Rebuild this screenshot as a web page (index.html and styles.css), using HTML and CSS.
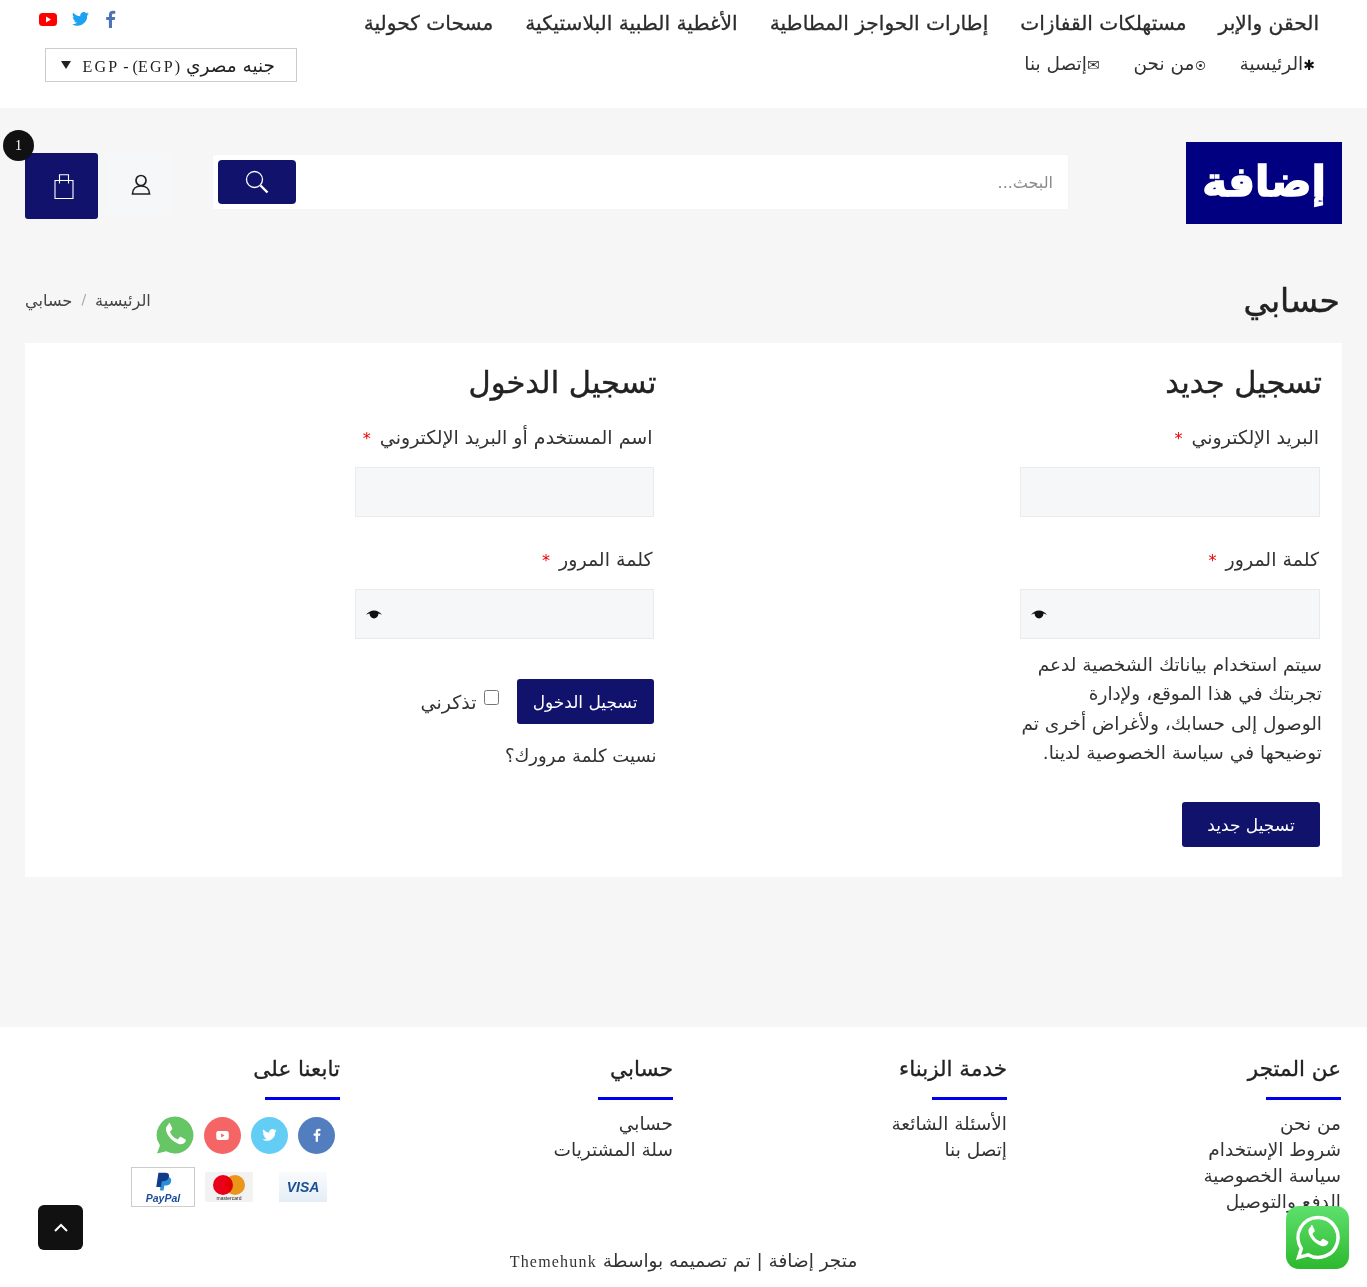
FILE: index.html
```html
<!DOCTYPE html>
<html lang="ar" dir="rtl">
<head>
  <meta charset="UTF-8">
  <title>حسابي — متجر إضافة</title>
  <link rel="stylesheet" href="styles.css">
</head>
<body>

  <!-- top bar -->
  <header class="top-bar">
    <div class="top-menus">
      <nav class="main-nav">
        <a href="#">الحقن والإبر</a>
        <a href="#">مستهلكات القفازات</a>
        <a href="#">إطارات الحواجز المطاطية</a>
        <a href="#">الأغطية الطبية البلاستيكية</a>
        <a href="#">مسحات كحولية</a>
      </nav>
      <nav class="sub-nav">
        <a href="#"><b>✱</b>الرئيسية</a>
        <a href="#"><i>⦿</i>من نحن</a>
        <a href="#"><i class="mail">✉</i>إتصل بنا</a>
      </nav>
    </div>
    <div class="top-side">
      <div class="top-social">
        <svg width="12" height="18" viewBox="0 0 12 18"><path fill="#4f74b5" d="M8 18V10h2.700l.5-3H8V5.200c0-.9.3-1.500 1.600-1.500h1.700V1C11 .9 10 .8 8.900 .8 6.500 .8 4.900 2.200 4.900 4.900V7H2.200v3h2.700v8z"/></svg>
        <svg width="17" height="14" viewBox="0 0 24 20"><path fill="#1da1f2" d="M24 2.400a9.800 9.800 0 0 1-2.800.8A4.900 4.900 0 0 0 23.300.5a9.800 9.800 0 0 1-3.100 1.200 4.900 4.900 0 0 0-8.400 4.500A14 14 0 0 1 1.700 1a4.900 4.900 0 0 0 1.500 6.600 4.900 4.900 0 0 1-2.200-.6 4.900 4.900 0 0 0 3.900 4.900 4.900 4.900 0 0 1-2.200.1 4.900 4.900 0 0 0 4.600 3.400A9.900 9.900 0 0 1 0 17.400 14 14 0 0 0 21.500 5a9.900 9.900 0 0 0 2.500-2.600z"/></svg>
        <svg width="18" height="13" viewBox="0 0 18 13"><rect width="18" height="13" rx="3.500" fill="#f00"/><path fill="#fff" d="M7 3.500v6l5-3z"/></svg>
      </div>
      <div class="currency">
        <span>جنيه مصري <span class="latin">(EGP) - EGP</span></span>
        <i class="currency-arrow"></i>
      </div>
    </div>
  </header>

  <div class="page">
    <!-- logo, search, cart -->
    <div class="mid-header">
      <div class="logo"><span>إضافة</span></div>
      <form class="search">
        <input type="text" placeholder="البحث...">
        <button type="button" class="search-btn">
          <svg width="26" height="26" viewBox="0 0 26 26" fill="none" stroke="#fff"><circle cx="10.500" cy="10.500" r="8" stroke-width="1.300"/><path d="M16.500 16.500l7 7" stroke-width="2.400"/></svg>
        </button>
      </form>
      <a class="account" href="#">
        <svg width="20" height="21" viewBox="0 0 20 21" fill="none" stroke="#222" stroke-width="1.700"><circle cx="10" cy="6.500" r="5"/><path d="M1.500 20c0-5 3.500-8 8.500-8s8.500 3 8.500 8z"/></svg>
      </a>
      <a class="cart" href="#">
        <svg width="20" height="25" viewBox="0 0 20 25" fill="none" stroke="#fff" stroke-width="1.100"><path d="M1 6.500h18v18H1zM5.500 9.500V.8h9v8.700"/></svg>
        <span class="cart-count">1</span>
      </a>
    </div>

    <div class="title-row">
      <h1>حسابي</h1>
      <div class="crumbs"><a href="#">الرئيسية</a><span class="crumb-sep">/</span><span>حسابي</span></div>
    </div>

    <!-- forms -->
    <section class="panel">
      <div class="col col-register">
        <h2>تسجيل جديد</h2>
        <label class="field-label">البريد الإلكتروني <em>*</em></label>
        <input class="field" type="text">
        <label class="field-label">كلمة المرور <em>*</em></label>
        <div class="pass-wrap">
          <input class="field" type="text">
          <svg class="eye" width="16" height="9" viewBox="0 0 16 9"><path fill="#111" d="M0 5C2 2 5 .5 8 .5S14 2 16 5c-1.200-.8-2.300-1.300-3.500-1.500C12.300 6.300 10.500 8.500 8 8.500S3.700 6.300 3.500 3.500C2.300 3.700 1.200 4.200 0 5z"/></svg>
        </div>
        <p class="privacy">سيتم استخدام بياناتك الشخصية لدعم تجربتك في هذا الموقع، ولإدارة<br>الوصول إلى حسابك، ولأغراض أخرى تم توضيحها في سياسة الخصوصية لدينا.</p>
        <button type="button" class="btn btn-register">تسجيل جديد</button>
      </div>
      <div class="col col-login">
        <h2>تسجيل الدخول</h2>
        <label class="field-label">اسم المستخدم أو البريد الإلكتروني <em>*</em></label>
        <input class="field" type="text">
        <label class="field-label">كلمة المرور <em>*</em></label>
        <div class="pass-wrap">
          <input class="field" type="text">
          <svg class="eye" width="16" height="9" viewBox="0 0 16 9"><path fill="#111" d="M0 5C2 2 5 .5 8 .5S14 2 16 5c-1.200-.8-2.300-1.300-3.500-1.500C12.300 6.300 10.500 8.500 8 8.500S3.700 6.300 3.500 3.500C2.300 3.700 1.200 4.200 0 5z"/></svg>
        </div>
        <div class="login-row">
          <button type="button" class="btn">تسجيل الدخول</button>
          <label class="remember"><input type="checkbox"> تذكرني</label>
        </div>
        <a class="lost" href="#">نسيت كلمة مرورك؟</a>
      </div>
    </section>
  </div>

  <footer class="footer">
    <div class="foot-cols">
      <div class="foot-col">
        <h3>عن المتجر</h3>
        <a href="#">من نحن</a>
        <a href="#">شروط الإستخدام</a>
        <a href="#">سياسة الخصوصية</a>
        <a href="#">الدفع والتوصيل</a>
      </div>
      <div class="foot-col">
        <h3>خدمة الزبناء</h3>
        <a href="#">الأسئلة الشائعة</a>
        <a href="#">إتصل بنا</a>
      </div>
      <div class="foot-col">
        <h3>حسابي</h3>
        <a href="#">حسابي</a>
        <a href="#">سلة المشتريات</a>
      </div>
      <div class="foot-col foot-follow">
        <h3>تابعنا على</h3>
        <div class="foot-social">
          <span class="round round-fb"><svg width="9" height="16" viewBox="0 0 12 18"><path fill="#fff" d="M8 18V10h2.700l.5-3H8V5.200c0-.9.3-1.500 1.600-1.500h1.700V1C11 .9 10 .8 8.900 .8 6.500 .8 4.900 2.200 4.900 4.900V7H2.200v3h2.700v8z"/></svg></span>
          <span class="round round-tw"><svg width="15" height="12" viewBox="0 0 24 20"><path fill="#fff" d="M24 2.400a9.800 9.800 0 0 1-2.800.8A4.900 4.900 0 0 0 23.300.5a9.800 9.800 0 0 1-3.100 1.200 4.900 4.900 0 0 0-8.400 4.500A14 14 0 0 1 1.700 1a4.900 4.900 0 0 0 1.500 6.600 4.900 4.900 0 0 1-2.200-.6 4.900 4.900 0 0 0 3.900 4.900 4.900 4.900 0 0 1-2.200.1 4.900 4.900 0 0 0 4.600 3.400A9.900 9.900 0 0 1 0 17.400 14 14 0 0 0 21.500 5a9.900 9.900 0 0 0 2.500-2.600z"/></svg></span>
          <span class="round round-yt"><svg width="13" height="9" viewBox="0 0 18 13"><rect width="18" height="13" rx="3" fill="#fff"/><path fill="#f56565" d="M7 3.500v6l5-3z"/></svg></span>
          <svg class="round-wa" width="39" height="38" viewBox="0 0 39 38"><path fill="#66c564" d="M20 .5a18.500 18.500 0 1 1-8.800 34.800L2 37.500l3-8A18.500 18.500 0 0 1 20 .5z"/><path fill="#fff" d="M13.500 8.500c-1.500 1-3 3-2.500 5.800 1 5.500 7 12 13 13.700 3 .8 5.500-.6 6.500-2.500.4-.8.400-1.600 0-2l-4.300-2.600c-.6-.3-1.200-.1-1.600.4l-1.300 1.600c-.4.400-.8.500-1.400.2-3-1.400-5.300-3.700-6.700-6.700-.2-.5-.1-1 .3-1.400l1.400-1.300c.4-.4.500-1 .3-1.500l-2-4.500c-.4-.8-1-.9-1.700-.2z"/></svg>
        </div>
        <div class="pay-cards">
          <span class="pay pay-visa"><b>VISA</b></span>
          <span class="pay pay-master"><i class="mc-red"></i><i class="mc-orange"></i><small>mastercard</small></span>
          <span class="pay pay-paypal">
            <svg width="20" height="24" viewBox="0 0 20 24"><path fill="#2a8fd6" d="M7 6h8c3 0 4.500 2 4 5-.6 3.500-3 5-6 5h-2l-1 6H6z"/><path fill="#123a8a" d="M4 1h8c3.500 0 5 2 4.500 4.500-.6 3.500-3 5.500-6.500 5.500H8l-1 7H1.500z"/></svg>
            <b class="pp-name">PayPal</b>
          </span>
        </div>
      </div>
    </div>
    <p class="copyright">متجر إضافة | تم تصميمه بواسطة <span class="latin">Themehunk</span></p>
  </footer>

  <a class="to-top" href="#">
    <svg width="14" height="9" viewBox="0 0 14 9" fill="none" stroke="#fff" stroke-width="2"><path d="M1 8l6-6 6 6"/></svg>
  </a>
  <a class="wa-float" href="#">
    <svg width="48" height="48" viewBox="0 0 48 48"><path fill="none" stroke="#fff" stroke-width="3.500" d="M24 3.500a20 20 0 1 1-10 37.300L4.500 43.500l2.800-9A20 20 0 0 1 24 3.500z"/><path fill="#fff" d="M17 12.500c-1.500 1-3 3-2.500 5.800 1 5.500 7 12 13 13.700 3 .8 5.500-.6 6.500-2.500.4-.8.400-1.600 0-2l-4.300-2.600c-.6-.3-1.200-.1-1.600.4l-1.300 1.600c-.4.400-.8.500-1.400.2-3-1.400-5.300-3.700-6.700-6.700-.2-.5-.1-1 .3-1.400l1.400-1.300c.4-.4.500-1 .3-1.500l-2-4.500c-.4-.8-1-.9-1.700-.2z"/></svg>
  </a>
</body>
</html>
```

FILE: styles.css
```css
:root {
  --navy: #10126b;
  --text: #222;
  --line: #e8eaec;
  --field: #f6f7f9;
  --page: #f6f6f6;
}
*, *::before, *::after { box-sizing: border-box; margin: 0; padding: 0; }
body {
  font-family: "DejaVu Sans", sans-serif;
  color: var(--text);
  background: #fff;
}
a { color: inherit; text-decoration: none; }
.latin { font-family: "Liberation Serif", serif; }

/* top bar */
.top-bar {
  height: 108px;
  display: flex;
  justify-content: space-between;
  padding: 0 48px 0 45px;
}
.main-nav {
  display: flex;
  gap: 32px;
  height: 46px;
  align-items: center;
  font-size: 20.200px;
  color: #2c2c2c;
  white-space: nowrap;
  -webkit-text-stroke: .3px #2c2c2c;
}
.sub-nav {
  display: flex;
  gap: 34px;
  margin-top: 8px;
  padding-right: 4px;
  font-size: 18.500px;
  line-height: 20px;
  color: #333;
}
.sub-nav i { font-style: normal; font-size: 11px; }
.sub-nav i.mail { font-size: 15px; }
.sub-nav b { font-size: 14px; color: #111; }
.top-side {
  width: 252px;
  display: flex;
  flex-direction: column;
}
.top-social {
  display: flex;
  justify-content: flex-end;
  align-items: center;
  gap: 15px;
  height: 38px;
  margin-left: -6px;
}
.currency {
  margin-top: 10px;
  height: 34px;
  border: 1px solid #ccc;
  display: flex;
  align-items: center;
  gap: 11px;
  padding: 0 21px 0 13px;
  font-size: 18.500px;
  white-space: nowrap;
}
.currency .latin { font-size: 16px; letter-spacing: 2.200px; }
.currency-arrow {
  width: 0; height: 0;
  border-left: 5.500px solid transparent;
  border-right: 5.500px solid transparent;
  border-top: 8px solid #222;
}

/* page body */
.page {
  background: var(--page);
  padding: 34px 25px 150px;
}
.mid-header {
  display: flex;
  align-items: flex-start;
  height: 82px;
}
.logo {
  width: 156px;
  height: 82px;
  background: #000080;
  color: #fff;
  display: flex;
  align-items: center;
  justify-content: center;
  font-size: 42px;
  font-weight: 700;
  line-height: 1;
  -webkit-text-stroke: 1.500px #fff;
}
.logo span { margin-top: -3px; }
.search {
  width: 857px;
  height: 56px;
  margin: 12px 117px 0 0;
  background: #fff;
  border: 1px solid #f1f5fb;
  border-radius: 3px;
  display: flex;
  align-items: center;
  padding: 0 15px 0 5px;
}
.search input {
  flex: 1;
  border: 0;
  outline: 0;
  background: none;
  font: inherit;
  font-size: 16px;
}
.search input::placeholder { color: #8a8a8a; }
.search-btn {
  width: 78px;
  height: 44px;
  border: 0;
  border-radius: 4px;
  background: var(--navy);
  display: flex;
  align-items: center;
  justify-content: center;
}
.account {
  width: 62px;
  height: 62px;
  margin: 11px 40px 0 0;
  background: #f6f7f8;
  border-radius: 4px;
  display: flex;
  align-items: center;
  justify-content: center;
}
.cart {
  position: relative;
  width: 73px;
  height: 66px;
  margin: 11px 12px 0 0;
  padding-left: 4px;
  background: var(--navy);
  border-radius: 3px;
  display: flex;
  align-items: center;
  justify-content: center;
}
.cart-count {
  position: absolute;
  top: -23px;
  left: -22px;
  width: 31px;
  height: 31px;
  border-radius: 50%;
  background: #111;
  color: #fff;
  font-family: "Liberation Serif", serif;
  font-size: 14px;
  display: flex;
  align-items: center;
  justify-content: center;
}

.title-row {
  display: flex;
  justify-content: space-between;
  align-items: center;
  height: 119px;
  padding: 33px 2px 0 0;
}
.title-row h1 { font-size: 33px; font-weight: 500; line-height: 1; -webkit-text-stroke: .4px var(--text); }
.crumbs { font-size: 16.200px; display: flex; gap: 9px; color: #444; }
.crumb-sep { color: #aaa; font-size: 14px; }

/* forms */
.panel {
  background: #fff;
  height: 534px;
  display: grid;
  grid-template-columns: 1fr 1fr;
  padding: 0 20px 0 0;
}
.col { width: 302px; padding-top: 23px; }
.col h2 {
  font-size: 30.500px;
  font-weight: 500;
  line-height: 34px;
  height: 34px;
  white-space: nowrap;
  -webkit-text-stroke: .4px var(--text);
}
.col-login { margin-right: 17px; }
.col-login .field, .col-login .field-label, .col-login .login-row { margin-right: 3px; }
.col-register .field-label, .col-register .field { margin-right: 2px; }
.field-label {
  display: block;
  height: 20px;
  font-size: 19px;
  line-height: 20px;
  margin-top: 27px;
  padding-right: 1px;
  color: #333;
  white-space: nowrap;
}
.field-label em { color: #e00; font-size: 16px; font-style: normal; margin-right: 3px; }
.field {
  display: block;
  width: 299px;
  height: 50px;
  border: 1px solid var(--line);
  background: var(--field);
  outline: 0;
}
.col-register .field { width: 300px; }
.pass-wrap { position: relative; margin-top: 20px; }
.pass-wrap .field { margin-top: 0; }
.pass-wrap + .login-row { margin-top: 40px; }
.field-label + .field { margin-top: 20px; }
.field + .field-label { margin-top: 32px; }
.eye { position: absolute; top: 21px; left: 11px; }
.privacy {
  font-size: 18.500px;
  line-height: 29.300px;
  color: #333;
  margin-top: 11px;
  width: 302px;
}
.btn {
  width: 137px;
  height: 45px;
  border: 0;
  border-radius: 3px;
  background: var(--navy);
  color: #fff;
  font: inherit;
  font-size: 17px;
}
.btn-register { width: 138px; display: block; margin: 35px 2px 0 0; }
.login-row { display: flex; align-items: center; gap: 18px; }
.remember { font-size: 19px; line-height: 20px; color: #333; display: flex; align-items: center; gap: 7px; }
.remember input { width: 15px; height: 15px; margin: 0 0 8px; }
.lost { display: block; font-size: 18px; line-height: 20px; margin: 22px 0 0; color: #333; }

/* footer */
.footer { position: relative; height: 260px; background: #fff; }
.foot-cols {
  display: grid;
  grid-template-columns: 334px 334px 333px 1fr;
  padding: 26px 26px 0 0;
}
.foot-col h3 {
  font-size: 21.500px;
  font-weight: 500;
  line-height: 32px;
  padding-bottom: 12px;
  margin-bottom: 14px;
  position: relative;
  -webkit-text-stroke: .3px var(--text);
}
.foot-col h3::after {
  content: "";
  position: absolute;
  right: 0;
  bottom: 0;
  width: 75px;
  height: 3px;
  margin-bottom: -3px;
  background: #00e;
}
.foot-col > a {
  display: block;
  font-size: 18.500px;
  line-height: 26px;
  color: #333;
}
.foot-follow { position: relative; }
.foot-social { display: flex; align-items: center; gap: 10px; padding-right: 5px; margin-top: 19px; }
.round {
  width: 37px;
  height: 37px;
  border-radius: 50%;
  display: flex;
  align-items: center;
  justify-content: center;
}
.round-fb { background: #527dbf; }
.round-tw { background: #63cdf5; }
.round-yt { background: #f56565; }
.pay-cards { display: flex; align-items: center; gap: 26px; padding-right: 13px; margin-top: 13px; }
.pay { display: block; position: relative; flex: none; }
.pay-visa {
  width: 48px;
  height: 30px;
  background: linear-gradient(#fafbfd, #e4edf6);
  text-align: center;
  font-family: "Liberation Sans", sans-serif;
  font-size: 14px;
  font-style: italic;
  line-height: 30px;
  color: #1a4f93;
}
.pay-master { width: 48px; height: 30px; background: #f2f2f2; border-radius: 2px; }
.mc-red, .mc-orange {
  position: absolute;
  top: 3px;
  width: 20px;
  height: 20px;
  border-radius: 50%;
}
.mc-red { left: 8px; background: #eb001b; }
.mc-orange { left: 20px; background: #f79e1b; mix-blend-mode: multiply; }
.pay-master small {
  position: absolute;
  bottom: 1px;
  left: 0;
  right: 0;
  text-align: center;
  direction: ltr;
  font-family: "Liberation Sans", sans-serif;
  font-size: 5px;
}
.pay-paypal {
  width: 64px;
  height: 40px;
  margin-right: -16px;
  border: 1px solid #ccc;
  background: #fff;
  display: flex;
  flex-direction: column;
  align-items: center;
  padding-top: 3px;
}
.pay-paypal svg { width: 17px; height: 22px; }
.pp-name {
  font-family: "Liberation Sans", sans-serif;
  font-size: 10.500px;
  line-height: 11px;
  font-style: italic;
  direction: ltr;
  color: #1e4b9a;
}
.copyright {
  position: absolute;
  top: 224px;
  left: 0;
  right: 0;
  text-align: center;
  font-size: 18.500px;
  line-height: 20px;
  color: #333;
}
.copyright .latin { font-size: 16px; letter-spacing: 1.200px; }

/* floating buttons */
.to-top {
  position: fixed;
  left: 38px;
  top: 1205px;
  width: 45px;
  height: 45px;
  background: #111;
  border-radius: 6px;
  display: flex;
  align-items: center;
  justify-content: center;
}
.wa-float {
  position: fixed;
  left: 1286px;
  top: 1206px;
  width: 63px;
  height: 63px;
  border-radius: 13px;
  background: linear-gradient(#5fe06e, #2cb92d);
  display: flex;
  align-items: center;
  justify-content: center;
}
```
